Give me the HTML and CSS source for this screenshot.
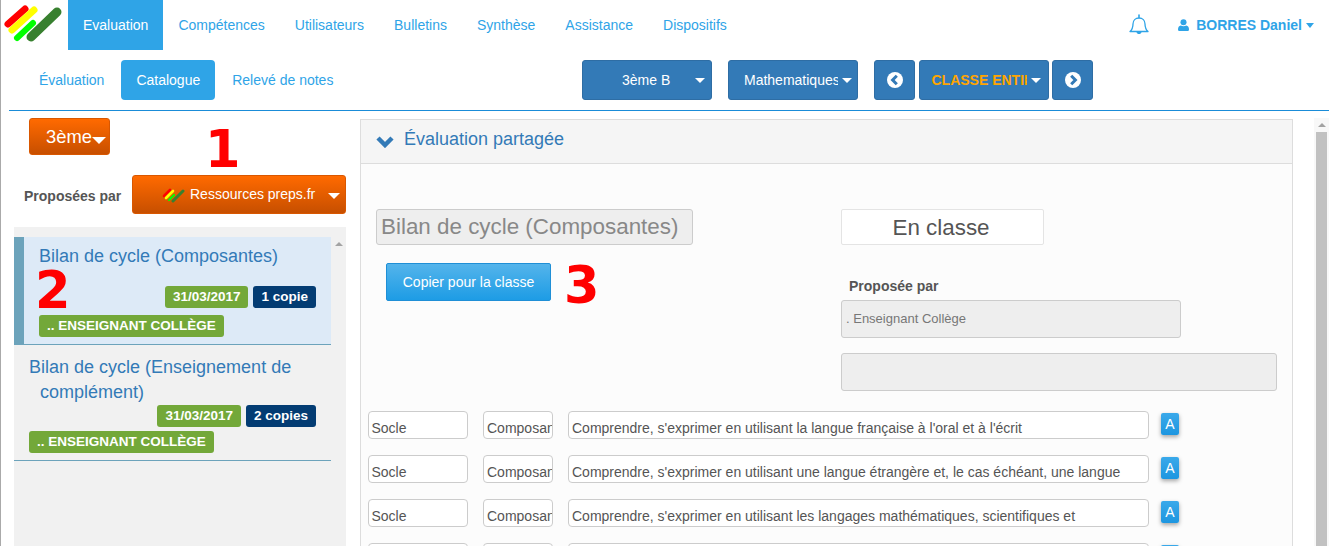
FILE: index.html
```html
<!DOCTYPE html>
<html lang="fr">
<head>
<meta charset="utf-8">
<title>Catalogue</title>
<link rel="stylesheet" href="styles.css">
</head>
<body>
<div class="app">
  <header class="topbar">
    <a class="logo" href="#">
      <svg width="68" height="50" viewBox="0 0 68 50">
        <line x1="8" y1="24" x2="25" y2="9" stroke="#ff0000" stroke-width="7" stroke-linecap="round"/>
        <line x1="12" y1="30" x2="34" y2="10" stroke="#ffff00" stroke-width="7" stroke-linecap="round"/>
        <line x1="17" y1="38" x2="33" y2="23" stroke="#00ff00" stroke-width="6" stroke-linecap="round"/>
        <line x1="31" y1="37" x2="57" y2="12" stroke="#38802f" stroke-width="9" stroke-linecap="round"/>
      </svg>
    </a>
    <nav class="mainnav">
      <a class="mainlink is-active" href="#">Evaluation</a>
      <a class="mainlink" href="#">Compétences</a>
      <a class="mainlink" href="#">Utilisateurs</a>
      <a class="mainlink" href="#">Bulletins</a>
      <a class="mainlink" href="#">Synthèse</a>
      <a class="mainlink" href="#">Assistance</a>
      <a class="mainlink" href="#">Dispositifs</a>
    </nav>
    <div class="usermenu">
      <svg class="bell" width="20" height="22" viewBox="0 0 20 22">
        <path d="M1 17.5c2.2-2 3-4 3-7.500 0-3.500 2.500-6 6-6s6 2.500 6 6c0 3.500 .8 5.500 3 7.500z" fill="none" stroke="#2fa4e7" stroke-width="1.300" stroke-linejoin="round"/>
        <path d="M10 1v2.500" stroke="#2fa4e7" stroke-width="1.600" stroke-linecap="round"/>
        <path d="M7.500 18c.3 2.800 4.700 2.800 5 0z" fill="#2fa4e7"/>
      </svg>
      <svg class="person" width="11" height="12" viewBox="0 0 12 13">
        <circle cx="6" cy="3.500" r="3.300" fill="#2fa4e7"/>
        <path d="M1 13q-1 0-1-1.500 0-4 3-4.500 3 1.500 6 0 3 .5 3 4.500 0 1.500-1 1.500z" fill="#2fa4e7"/>
      </svg>
      <span class="username">BORRES Daniel</span>
      <span class="caret caret-blue"></span>
    </div>
  </header>

  <div class="subbar">
    <nav class="subnav">
      <a class="pill" href="#">Évaluation</a>
      <a class="pill is-active" href="#">Catalogue</a>
      <a class="pill" href="#">Relevé de notes</a>
    </nav>
    <div class="selectors">
      <div class="sel sel-class"><span class="sel-text">3ème B</span><span class="caret"></span></div>
      <div class="sel sel-subject"><span class="sel-text">Mathematiques</span><span class="caret"></span></div>
      <div class="stepper">
        <div class="sel sel-arrow">
          <svg width="16" height="16" viewBox="0 0 16 16"><circle cx="8" cy="8" r="8" fill="#fff"/><path d="M9.800 3.800L5.600 8l4.200 4.200" fill="none" stroke="#337ab7" stroke-width="3"/></svg>
        </div>
        <div class="sel sel-group"><span class="sel-text">CLASSE ENTIERE</span><span class="caret"></span></div>
        <div class="sel sel-arrow">
          <svg width="16" height="16" viewBox="0 0 16 16"><circle cx="8" cy="8" r="8" fill="#fff"/><path d="M6.200 3.800L10.400 8l-4.200 4.200" fill="none" stroke="#337ab7" stroke-width="3"/></svg>
        </div>
      </div>
    </div>
  </div>

  <main class="content">
    <aside class="catalog">
      <div class="level-wrap"><div class="btn-orange level">3ème<span class="caret"></span></div></div>
      <div class="source-row">
        <span class="source-label">Proposées par</span>
        <div class="btn-orange source">
          <svg width="30" height="16" viewBox="0 0 30 16">
            <line x1="3" y1="9" x2="9" y2="3" stroke="#f00" stroke-width="2.600" stroke-linecap="round"/>
            <line x1="5" y1="11" x2="12" y2="4" stroke="#ff0" stroke-width="2.600" stroke-linecap="round"/>
            <line x1="8" y1="13" x2="13" y2="8" stroke="#0f0" stroke-width="2.200" stroke-linecap="round"/>
            <line x1="12" y1="14" x2="22" y2="4" stroke="#38802f" stroke-width="3" stroke-linecap="round"/>
          </svg>
          <span class="source-text">Ressources preps.fr</span>
          <span class="caret"></span>
        </div>
      </div>
      <div class="list-box">
        <div class="list">
          <article class="item is-selected">
            <h3 class="item-title">Bilan de cycle (Composantes)</h3>
            <div class="badges"><span class="badge green">31/03/2017</span><span class="badge navy">1 copie</span></div>
            <div class="author"><span class="badge green">.. ENSEIGNANT COLLÈGE</span></div>
          </article>
          <article class="item">
            <h3 class="item-title">Bilan de cycle (Enseignement de complément)</h3>
            <div class="badges"><span class="badge green">31/03/2017</span><span class="badge navy">2 copies</span></div>
            <div class="author"><span class="badge green">.. ENSEIGNANT COLLÈGE</span></div>
          </article>
        </div>
        <div class="mini-scroll"><span class="arrow-up"></span></div>
      </div>
    </aside>

    <section class="panel">
      <div class="panel-head">
        <svg width="18" height="13" viewBox="0 0 18 13"><path d="M2 3l7 7 7-7" fill="none" stroke="#337ab7" stroke-width="4.500"/></svg>
        <span class="panel-title">Évaluation partagée</span>
      </div>
      <div class="panel-body">
        <div class="form-top">
          <div class="form-left">
            <div class="title-field">Bilan de cycle (Composantes)</div>
            <button class="copy-btn" type="button">Copier pour la classe</button>
          </div>
          <div class="form-right">
            <div class="mode-field">En classe</div>
            <div class="prop-label">Proposée par</div>
            <div class="prop-field">. Enseignant Collège</div>
            <div class="empty-field"></div>
          </div>
        </div>
        <div class="rows">
          <div class="row"><div class="cell c-a">Socle</div><div class="cell c-b">Composantes</div><div class="cell c-c">Comprendre, s'exprimer en utilisant la langue française à l'oral et à l'écrit</div><span class="a-btn">A</span></div>
          <div class="row"><div class="cell c-a">Socle</div><div class="cell c-b">Composantes</div><div class="cell c-c">Comprendre, s'exprimer en utilisant une langue étrangère et, le cas échéant, une langue régionale</div><span class="a-btn">A</span></div>
          <div class="row"><div class="cell c-a">Socle</div><div class="cell c-b">Composantes</div><div class="cell c-c">Comprendre, s'exprimer en utilisant les langages mathématiques, scientifiques et informatiques</div><span class="a-btn">A</span></div>
          <div class="row"><div class="cell c-a">Socle</div><div class="cell c-b">Composantes</div><div class="cell c-c">Comprendre, s'exprimer en utilisant les langages des arts et du corps</div><span class="a-btn">A</span></div>
        </div>
      </div>
    </section>

    <div class="page-scroll"><span class="arrow-up"></span><span class="thumb"></span></div>

    <span class="mark mark-1">1</span>
    <span class="mark mark-2">2</span>
    <span class="mark mark-3">3</span>
  </main>
</div>
</body>
</html>
```

FILE: styles.css
```css
* { box-sizing: border-box; }
html, body { margin: 0; height: 100%; overflow: hidden; background: #fff; }
body { font-family: "Liberation Sans", Arial, sans-serif; font-size: 14px; color: #555; }
a { text-decoration: none; }

.app { height: 546px; border-left: 1px solid #aaa; display: flex; flex-direction: column; overflow: hidden; }

.topbar { display: flex; height: 50px; flex: none; }
.logo { display: block; width: 67px; flex: none; }
.logo svg { display: block; margin-left: -1px; }
.mainnav { display: flex; }
.mainlink { padding: 0 15px; line-height: 50px; color: #2fa4e7; }
.mainlink.is-active { background: #2fa4e7; color: #fff; }
.usermenu { margin-left: auto; display: flex; align-items: center; padding-right: 15px; }
.bell { margin-right: 29px; }
.person { margin-right: 7px; }
.username { font-weight: bold; color: #2fa4e7; }
.caret { display: inline-block; width: 0; height: 0; border-left: 5px solid transparent; border-right: 5px solid transparent; border-top: 5px solid #fff; }
.caret-blue { border-top-color: #2fa4e7; margin-left: 4px; margin-top: 1px; border-left-width: 4px; border-right-width: 4px; }

.subbar { display: flex; height: 61px; flex: none; padding-top: 10px; margin-left: 8px; border-bottom: 1px solid #1a8cd8; }
.subnav { display: flex; padding-left: 15px; gap: 2px; width: 573px; height: 40px; }
.pill { padding: 0 15px; line-height: 40px; color: #2fa4e7; border-radius: 4px; }
.pill.is-active { background: #2fa4e7; color: #fff; }
.selectors { display: flex; gap: 16px; height: 40px; }
.stepper { display: flex; gap: 3px; }
.stepper .sel-group { margin-left: 1px; }
.sel { height: 40px; background: #337ab7; border: 1px solid #2e6da4; border-radius: 3px; color: #fff; display: flex; align-items: center; }
.sel-text { overflow: hidden; white-space: nowrap; }
.sel-class { width: 130px; padding-left: 39px; }
.sel-class .sel-text { width: 73px; }
.sel-subject { width: 130px; padding-left: 15px; }
.sel-subject .sel-text { width: 94px; }
.sel-subject .caret { margin-left: 4px; }
.sel-arrow { width: 41px; justify-content: center; }
.sel-group { width: 130px; padding-left: 12px; }
.sel-group .sel-text { width: 95.5px; margin-left: -0.5px; color: #ffa500; font-weight: bold; }
.sel-group .caret { margin-left: 4px; }

.content { position: relative; flex: 1; display: flex; min-height: 0; padding-top: 7px; }

.catalog { flex: none; margin-left: 13px; width: 332px; margin-right: 14px; display: flex; flex-direction: column; }
.btn-orange { background: linear-gradient(#ff6a00, #c74f00); border: 1px solid #d95700; border-radius: 3px; color: #fff; display: flex; align-items: center; }
.level-wrap { padding-left: 15px; height: 57px; }
.level { width: 81px; height: 37px; font-size: 18.4px; padding-left: 16px; }
.level .caret { margin-top: 7px; border-left-width: 7px; border-right-width: 7px; border-top-width: 7px; }
.source-row { display: flex; align-items: center; height: 39px; padding-left: 10px; }
.source-label { font-weight: bold; width: 108px; flex: none; padding-top: 2px; }
.source { width: 214px; height: 39px; padding-left: 28px; }
.source-text { margin-left: -1px; margin-bottom: 2px; white-space: nowrap; }
.source .caret { margin-left: 13px; margin-top: 2px; border-left-width: 6px; border-right-width: 6px; border-top-width: 6px; }

.list-box { margin-top: 13px; flex: 1; background: #f1f1f1; display: flex; padding-top: 10px; min-height: 0; }
.list { width: 317px; flex: none; }
.mini-scroll { flex: 1; display: flex; justify-content: center; padding-top: 5px; }
.arrow-up { display: block; width: 0; height: 0; border-left: 4px solid transparent; border-right: 4px solid transparent; border-bottom: 4px solid #a3a3a3; }

.item { border-bottom: 1px solid #6ca3bb; padding: 10px 15px 7px; height: 116px; }
.item.is-selected { background: #ddeaf7; border-left: 10px solid #6ca3bb; height: 108px; padding-top: 7px; }
.item-title { margin: 0; font-weight: normal; font-size: 18px; line-height: 25px; color: #337ab7; padding-left: 11px; text-indent: -11px; }
.item.is-selected .item-title { padding-left: 0; text-indent: 0; line-height: 24px; height: 42px; }
.badges { display: flex; justify-content: flex-end; gap: 5px; height: 26px; }
.is-selected .badges { height: 29px; }
.badge { display: inline-block; height: 22px; line-height: 22px; padding: 0 8px; border-radius: 3px; color: #fff; font-weight: bold; font-size: 13.5px; white-space: nowrap; }
.green { background: #73a839; }
.navy { background: #033c73; }

.panel { width: 933px; flex: none; border: 1px solid #ddd; border-bottom: 0; display: flex; flex-direction: column; margin-top: 1px; min-height: 0; }
.panel-head { height: 44px; flex: none; background: #f5f5f5; border-bottom: 1px solid #ddd; display: flex; align-items: center; padding: 0 15px; }
.panel-title { font-size: 18px; color: #337ab7; margin-left: 10px; margin-top: -5px; }
.panel-body { flex: 1; background: #fcfcfc; padding: 45px 0 0 7px; min-height: 0; overflow: hidden; }
.form-top { display: flex; height: 202px; }
.form-left { width: 473px; padding-left: 8px; flex: none; }
.title-field { width: 317px; height: 36px; background: #eee; border: 1px solid #ccc; border-radius: 3px; font-size: 22.4px; line-height: 34px; color: #888; padding-left: 4px; white-space: nowrap; }
.copy-btn { display: block; margin: 18px 0 0 10px; width: 165px; height: 38px; padding: 0; background: linear-gradient(#54b4eb, #1d9ce5); border: 1px solid #1f8fd6; border-radius: 2px; color: #fff; font: 14px "Liberation Sans", Arial, sans-serif; }
.form-right { flex: 1; }
.mode-field { width: 203px; height: 36px; padding-right: 3px; background: #fff; border: 1px solid #e4e4e4; border-radius: 2px; font-size: 22.4px; line-height: 36px; text-align: center; color: #555; }
.prop-label { font-weight: bold; margin: 31px 0 0 8px; line-height: 20px; height: 20px; }
.prop-field { width: 340px; height: 38px; margin-top: 4px; background: #eee; border: 1px solid #ccc; border-radius: 3px; font-size: 13px; line-height: 36px; color: #777; padding-left: 4px; }
.empty-field { width: 436px; height: 38px; margin-top: 15px; background: #eee; border: 1px solid #ccc; border-radius: 3px; }

.rows { display: flex; flex-direction: column; gap: 16px; }
.row { display: flex; height: 28px; flex: none; }
.cell { height: 28px; background: #fff; border: 1px solid #ccc; border-radius: 4px; line-height: 32px; padding-left: 3px; overflow: hidden; white-space: nowrap; color: #555; }
.c-a { width: 100px; margin-right: 15px; padding-left: 2.5px; }
.c-b { width: 70px; margin-right: 15px; }
.c-c { width: 581px; margin-right: 12px; white-space: normal; }
.a-btn { width: 18px; height: 22px; margin-top: 2px; background: linear-gradient(#3aa9ea, #1d96e0); border-radius: 2px; color: #fff; text-align: center; line-height: 22px; box-shadow: 0 2px 4px rgba(0,0,0,.35); }

.page-scroll { margin-left: 21px; width: 15px; flex: none; background: #f8f8f8; display: flex; flex-direction: column; align-items: center; padding-top: 5px; }
.thumb { width: 11px; flex: 1; background: #c1c1c1; margin-top: 5px; }

.mark { position: absolute; font-family: "DejaVu Sans", sans-serif; font-weight: bold; font-size: 51px; line-height: 51px; color: #ff0000; }
.mark-1 { left: 204px; top: 13px; }
.mark-2 { left: 34px; top: 154px; }
.mark-3 { left: 563px; top: 149px; }
```
